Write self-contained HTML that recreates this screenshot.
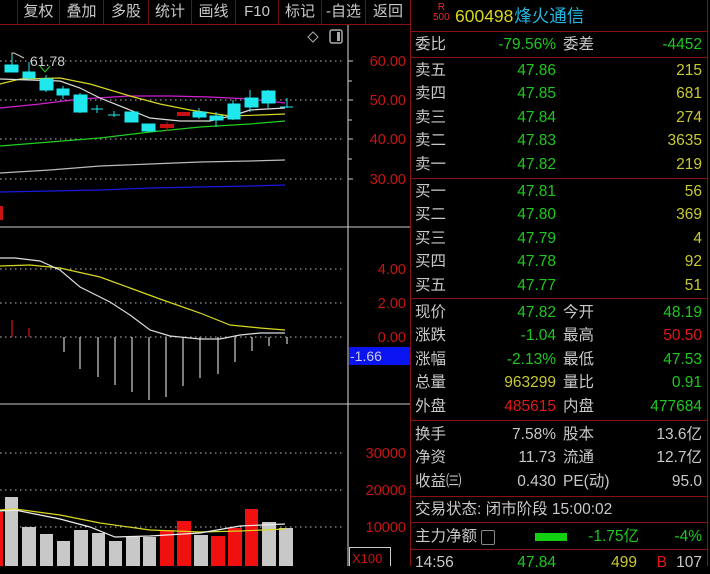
<!DOCTYPE html>
<html><head><meta charset="utf-8"><style>
body{margin:0;background:#000;width:710px;height:566px;overflow:hidden;font-family:"Liberation Sans","Noto Sans CJK SC",sans-serif;position:relative}
.tb{position:absolute;top:0;height:24px;color:#c8c8c8;font-size:15px;line-height:24px;text-align:center;border-left:1px solid #6a1010}
.rp{position:absolute;left:410px;top:0;width:296px;height:566px;border-left:1px solid #8a1010;border-right:1px solid #8a1010}
.row{position:absolute;left:4px;width:290px;height:23px;font-size:15.5px;line-height:23px;color:#c8c8c8}
.row span{position:absolute}
.l1{left:0}.v1{right:149px;text-align:right}.l2{left:148px}.v2{right:3px;text-align:right}
.g{color:#1ec81e}.y{color:#c8c832}.r{color:#e01818}.w{color:#c8c8c8}
.hl{position:absolute;left:0;width:296px;height:1px;background:#8a1010}
</style></head><body>
<div class="tb" style="left:17px;width:41px">复权</div>
<div class="tb" style="left:59px;width:43px">叠加</div>
<div class="tb" style="left:103px;width:44px">多股</div>
<div class="tb" style="left:148px;width:42px">统计</div>
<div class="tb" style="left:191px;width:43px">画线</div>
<div class="tb" style="left:235px;width:42px">F10</div>
<div class="tb" style="left:278px;width:42px">标记</div>
<div class="tb" style="left:321px;width:43px">-自选</div>
<div class="tb" style="left:365px;width:44px">返回</div>
<div style="position:absolute;left:0;top:24px;width:410px;height:1px;background:#8a1010"></div>

<svg width="410" height="566" style="position:absolute;left:0;top:0" font-family="Liberation Sans,sans-serif">
<g stroke="#bbb" stroke-dasharray="1.5,3.5" stroke-width="1">
<line x1="0" y1="61" x2="345" y2="61"/><line x1="0" y1="100" x2="345" y2="100"/>
<line x1="0" y1="139" x2="345" y2="139"/><line x1="0" y1="179" x2="345" y2="179"/>
<line x1="0" y1="269" x2="345" y2="269"/><line x1="0" y1="303" x2="345" y2="303"/><line x1="0" y1="337" x2="345" y2="337"/>
<line x1="0" y1="453" x2="345" y2="453"/><line x1="0" y1="490" x2="345" y2="490"/><line x1="0" y1="527" x2="345" y2="527"/>
</g>
<line x1="348" y1="25" x2="348" y2="566" stroke="#ddd"/>
<line x1="0" y1="227" x2="410" y2="227" stroke="#ccc"/>
<line x1="0" y1="404" x2="410" y2="404" stroke="#ccc"/>
<g stroke="#ccc"><line x1="348" y1="61" x2="353" y2="61"/><line x1="348" y1="81" x2="352" y2="81"/><line x1="348" y1="100" x2="353" y2="100"/><line x1="348" y1="120" x2="352" y2="120"/><line x1="348" y1="139" x2="353" y2="139"/><line x1="348" y1="159" x2="352" y2="159"/><line x1="348" y1="179" x2="353" y2="179"/></g>
<g fill="#c81414" font-size="14.5" text-anchor="end">
<text x="406" y="66">60.00</text><text x="406" y="105">50.00</text><text x="406" y="144">40.00</text><text x="406" y="184">30.00</text>
<text x="406" y="274">4.00</text><text x="406" y="308">2.00</text><text x="406" y="342">0.00</text>
<text x="406" y="458">30000</text><text x="406" y="495">20000</text><text x="406" y="532">10000</text>
</g>
<rect x="349" y="347" width="61" height="18" fill="#0a14f0"/>
<text x="350" y="361" fill="#ccd" font-size="14">-1.66</text>
<rect x="349.5" y="547.5" width="41" height="20" fill="none" stroke="#ccc"/>
<text x="352" y="563" fill="#c81414" font-size="13">X100</text>
<path d="M308 37 l5 -5 5 5 -5 5z" fill="none" stroke="#aaa"/>
<rect x="330" y="30" width="12" height="13" rx="2" fill="none" stroke="#aaa" stroke-width="1.5"/><rect x="337" y="32" width="3" height="9" fill="#aaa"/>
<text x="30" y="66" fill="#ccc" font-size="14">61.78</text>
<path d="M12 65 V53 h2 l10 5" fill="none" stroke="#ccc"/>
<path d="M40 66 l5 6 5 -6" fill="none" stroke="#2c2"/>
<rect x="0" y="206" width="3" height="14" fill="#c81414"/>
<polyline points="0,108 40,104 80,99 130,96 170,96 210,97 250,99 285,103" fill="none" stroke="#d020d0" stroke-width="1.2"/>
<polyline points="0,146 50,142 100,138 150,132 200,127 250,124 285,121" fill="none" stroke="#20d020" stroke-width="1.2"/>
<polyline points="0,173 50,170 100,166 150,164 200,162 250,161 285,160" fill="none" stroke="#bbb" stroke-width="1.2"/>
<polyline points="0,192 50,191 100,190 150,188 200,187 250,186 285,185" fill="none" stroke="#1818e0" stroke-width="1.2"/>
<polyline points="0,84 20,79 60,78 90,84 130,96 160,104 190,110 230,116 260,115 285,114" fill="none" stroke="#d8d820" stroke-width="1.2"/>
<polyline points="0,79 30,80 60,81 80,88 100,98 130,110 150,118 180,121 210,121 235,115 250,110 285,108" fill="none" stroke="#ddd" stroke-width="1.2"/>
<g fill="#1ee8ee" stroke="#1ee8ee">
<line x1="12" y1="55" x2="12" y2="72"/><rect x="5" y="65" width="13" height="7"/>
<line x1="29" y1="62" x2="29" y2="80"/><rect x="23" y="72" width="12" height="6"/>
<line x1="46" y1="75" x2="46" y2="92"/><rect x="40" y="79" width="13" height="11"/>
<line x1="63" y1="86" x2="63" y2="99"/><rect x="57" y="89" width="12" height="6"/>
<line x1="80" y1="93" x2="80" y2="113"/><rect x="74" y="95" width="13" height="17"/>
<line x1="97" y1="105" x2="97" y2="113"/><line x1="91" y1="109" x2="103" y2="109"/>
<line x1="114" y1="111" x2="114" y2="117"/><line x1="108" y1="115" x2="120" y2="115"/>
<rect x="125" y="112" width="13" height="10"/>
<rect x="142" y="124" width="13" height="7"/>
<line x1="199" y1="108" x2="199" y2="119"/><rect x="193" y="112" width="13" height="5"/>
<line x1="216" y1="112" x2="216" y2="127"/><rect x="210" y="116" width="13" height="4"/>
<line x1="233" y1="100" x2="233" y2="120"/><rect x="228" y="104" width="12" height="15"/>
<line x1="250" y1="90" x2="250" y2="112"/><rect x="245" y="98" width="13" height="9"/>
<line x1="268" y1="90" x2="268" y2="108"/><rect x="262" y="91" width="13" height="12"/>
<line x1="287" y1="98" x2="287" y2="108"/><line x1="280" y1="107" x2="293" y2="107"/>
</g>
<g fill="#c81010"><rect x="160" y="124" width="14" height="4"/><line x1="167" y1="122" x2="167" y2="131" stroke="#c81010"/><rect x="177" y="112" width="13" height="4"/></g>
<g stroke="#c0c0c0" stroke-width="1.3">
<line x1="64" y1="337" x2="64" y2="352"/><line x1="80" y1="337" x2="80" y2="369"/><line x1="98" y1="337" x2="98" y2="377"/><line x1="115" y1="337" x2="115" y2="385"/><line x1="132" y1="337" x2="132" y2="392"/><line x1="149" y1="337" x2="149" y2="400"/><line x1="166" y1="337" x2="166" y2="397"/><line x1="183" y1="337" x2="183" y2="386"/><line x1="200" y1="337" x2="200" y2="378"/><line x1="218" y1="337" x2="218" y2="374"/><line x1="235" y1="337" x2="235" y2="362"/><line x1="252" y1="337" x2="252" y2="351"/><line x1="269" y1="337" x2="269" y2="346"/><line x1="287" y1="337" x2="287" y2="344"/>
</g>
<line x1="12" y1="337" x2="12" y2="320" stroke="#d01010" stroke-width="1.3"/><line x1="29" y1="337" x2="29" y2="328" stroke="#d01010" stroke-width="1.3"/>
<polyline points="0,266 30,265 60,268 100,277 130,288 160,299 200,313 230,325 260,328 285,330" fill="none" stroke="#d8d820" stroke-width="1.2"/>
<polyline points="0,258 15,258 40,261 60,270 80,287 110,302 130,315 150,330 170,336 200,339 220,339 240,335 260,333 285,333" fill="none" stroke="#ddd" stroke-width="1.2"/>
<g fill="#c8c8c8">
<rect x="5" y="497" width="13" height="69"/><rect x="22" y="527" width="14" height="39"/><rect x="40" y="534" width="13" height="32"/><rect x="57" y="541" width="13" height="25"/><rect x="74" y="530" width="14" height="36"/><rect x="92" y="533" width="13" height="33"/><rect x="109" y="541" width="13" height="25"/><rect x="126" y="537" width="14" height="29"/><rect x="143" y="537" width="13" height="29"/><rect x="194" y="535" width="14" height="31"/><rect x="262" y="522" width="14" height="44"/><rect x="279" y="528" width="14" height="38"/>
</g>
<g fill="#f01010">
<rect x="0" y="512" width="3" height="54"/><rect x="160" y="530" width="14" height="36"/><rect x="177" y="521" width="14" height="45"/><rect x="211" y="536" width="14" height="30"/><rect x="228" y="528" width="14" height="38"/><rect x="245" y="509" width="13" height="57"/>
</g>
<polyline points="0,510 15,509 60,515 100,523 150,530 200,532 240,531 285,529" fill="none" stroke="#d8d820" stroke-width="1.2"/>
<polyline points="0,511 15,510 60,519 90,527 115,537 150,536 200,533 240,526 285,524" fill="none" stroke="#eee" stroke-width="1.2"/>
</svg>

<div class="rp">
<div style="position:absolute;left:22px;top:3px;font-size:10px;color:#e03030;line-height:10px;text-align:center">R<br>500</div>
<div style="position:absolute;left:44px;top:3px;font-size:17.5px;color:#d8d820">600498 <span style="color:#20b8e0;margin-left:-4px">烽火通信</span></div>
<div class="hl" style="top:31px"></div>
<div class="row" style="top:33px"><span class="l1">委比</span><span class="v1 g">-79.56%</span><span class="l2">委差</span><span class="v2 g">-4452</span></div>
<div class="hl" style="top:57px"></div>
<div class="row" style="top:59px"><span class="l1">卖五</span><span class="v1 g">47.86</span><span class="v2 y">215</span></div>
<div class="row" style="top:82px"><span class="l1">卖四</span><span class="v1 g">47.85</span><span class="v2 y">681</span></div>
<div class="row" style="top:106px"><span class="l1">卖三</span><span class="v1 g">47.84</span><span class="v2 y">274</span></div>
<div class="row" style="top:129px"><span class="l1">卖二</span><span class="v1 g">47.83</span><span class="v2 y">3635</span></div>
<div class="row" style="top:153px"><span class="l1">卖一</span><span class="v1 g">47.82</span><span class="v2 y">219</span></div>
<div class="hl" style="top:178px"></div>
<div class="row" style="top:180px"><span class="l1">买一</span><span class="v1 g">47.81</span><span class="v2 y">56</span></div>
<div class="row" style="top:203px"><span class="l1">买二</span><span class="v1 g">47.80</span><span class="v2 y">369</span></div>
<div class="row" style="top:227px"><span class="l1">买三</span><span class="v1 g">47.79</span><span class="v2 y">4</span></div>
<div class="row" style="top:250px"><span class="l1">买四</span><span class="v1 g">47.78</span><span class="v2 y">92</span></div>
<div class="row" style="top:274px"><span class="l1">买五</span><span class="v1 g">47.77</span><span class="v2 y">51</span></div>
<div class="hl" style="top:298px"></div>
<div class="row" style="top:301px"><span class="l1">现价</span><span class="v1 g">47.82</span><span class="l2">今开</span><span class="v2 g">48.19</span></div>
<div class="row" style="top:324px"><span class="l1">涨跌</span><span class="v1 g">-1.04</span><span class="l2">最高</span><span class="v2 r">50.50</span></div>
<div class="row" style="top:348px"><span class="l1">涨幅</span><span class="v1 g">-2.13%</span><span class="l2">最低</span><span class="v2 g">47.53</span></div>
<div class="row" style="top:371px"><span class="l1">总量</span><span class="v1 y">963299</span><span class="l2">量比</span><span class="v2 g">0.91</span></div>
<div class="row" style="top:395px"><span class="l1">外盘</span><span class="v1 r">485615</span><span class="l2">内盘</span><span class="v2 g">477684</span></div>
<div class="hl" style="top:420px"></div>
<div class="row" style="top:423px"><span class="l1">换手</span><span class="v1">7.58%</span><span class="l2">股本</span><span class="v2">13.6亿</span></div>
<div class="row" style="top:446px"><span class="l1">净资</span><span class="v1">11.73</span><span class="l2">流通</span><span class="v2">12.7亿</span></div>
<div class="row" style="top:470px"><span class="l1">收益㈢</span><span class="v1">0.430</span><span class="l2">PE(动)</span><span class="v2">95.0</span></div>
<div class="hl" style="top:496px"></div>
<div class="row" style="top:498px"><span class="l1">交易状态: 闭市阶段 15:00:02</span></div>
<div class="hl" style="top:522px"></div>
<div class="row" style="top:525px"><span class="l1">主力净额</span><span style="left:66px;top:5px;width:12px;height:13px;border:1px solid #888;border-radius:2px"></span><span style="left:120px;top:8px;width:32px;height:8px;background:#10d010"></span><span class="g" style="right:66px">-1.75亿</span><span class="v2 g">-4%</span></div>
<div class="hl" style="top:549px"></div>
<div class="row" style="top:551px"><span class="l1">14:56</span><span class="v1 g">47.84</span><span class="y" style="right:68px">499</span><span class="r" style="right:38px">B</span><span style="right:3px">107</span></div>
</div>
</body></html>
